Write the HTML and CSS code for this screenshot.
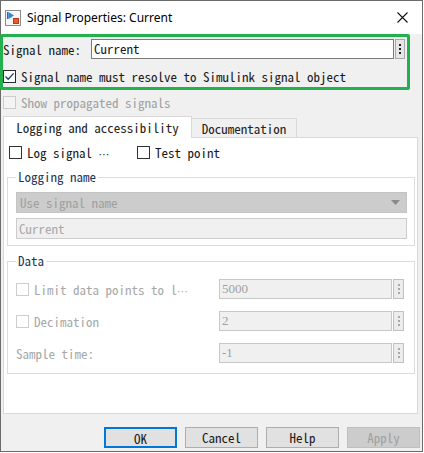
FILE: index.html
```html
<!DOCTYPE html>
<html>
<head>
<meta charset="utf-8">
<link rel="stylesheet" href="styles.css">
</head>
<body>
<div class="window">
  <div class="titlebar">
    <svg class="app-icon" width="16" height="16" viewBox="0 0 16 16">
      <rect x="0.5" y="0.5" width="15" height="15" fill="#f6f6f6" stroke="#8c8c8c"/>
      <rect x="2" y="2" width="1.5" height="7" fill="#1d6cc0"/>
      <path d="M3.5 2 L9 5.5 L3.5 9 Z" fill="#2f86d8"/>
      <rect x="8.5" y="8.5" width="5" height="5" fill="#ee5a2c" stroke="#b8381a"/>
    </svg>
    <span class="title">Signal Properties: Current</span>
    <svg class="close" width="11" height="11" viewBox="0 0 11 11">
      <path d="M0.5 0.5 L10.5 10.5 M10.5 0.5 L0.5 10.5" stroke="#111" stroke-width="1.1"/>
    </svg>
  </div>

  <div class="highlight">
    <div class="name-row">
      <span class="name-label">Signal name:</span>
      <div class="name-input">Current</div>
      <div class="dots-btn"><svg width="2" height="10" viewBox="0 0 2 10"><rect y="0" width="2" height="2"/><rect y="4" width="2" height="2"/><rect y="8" width="2" height="2"/></svg></div>
    </div>
    <div class="check-row">
      <span class="cb checked"><svg width="11" height="11" viewBox="0 0 11 11"><path d="M1.5 5.5 L4.2 8.2 L9.6 2.4" fill="none" stroke="#1d3f6c" stroke-width="1.3"/></svg></span>
      <span>Signal name must resolve to Simulink signal object</span>
    </div>
  </div>

  <div class="check-row show-row disabled">
    <span class="cb"></span>
    <span>Show propagated signals</span>
  </div>

  <div class="tabs">
    <div class="tab active">Logging and accessibility</div>
    <div class="tab">Documentation</div>
  </div>

  <div class="panel">
    <div class="panel-checks">
      <div class="check-item log-item"><span class="cb"></span><span>Log signal <span class="ell">⋯</span></span></div>
      <div class="check-item"><span class="cb"></span><span>Test point</span></div>
    </div>

    <fieldset class="group logging">
      <legend>Logging name</legend>
      <div class="select">
        <span>Use signal name</span>
        <svg class="arrow" width="9" height="5" viewBox="0 0 9 5"><path d="M0 0 H9 L4.5 5 Z" fill="#8a8a8a"/></svg>
      </div>
      <div class="field">Current</div>
    </fieldset>

    <fieldset class="group data">
      <legend>Data</legend>
      <div class="data-grid">
        <div class="data-label"><span class="cb dis"></span><span>Limit data points to l<span class="ell">⋯</span></span></div>
        <div class="value">5000</div>
        <div class="dots-btn dis"><svg width="2" height="10" viewBox="0 0 2 10"><rect y="0" width="2" height="2"/><rect y="4" width="2" height="2"/><rect y="8" width="2" height="2"/></svg></div>

        <div class="data-label"><span class="cb dis"></span><span>Decimation</span></div>
        <div class="value">2</div>
        <div class="dots-btn dis"><svg width="2" height="10" viewBox="0 0 2 10"><rect y="0" width="2" height="2"/><rect y="4" width="2" height="2"/><rect y="8" width="2" height="2"/></svg></div>

        <div class="data-label"><span>Sample time:</span></div>
        <div class="value">-1</div>
        <div class="dots-btn dis"><svg width="2" height="10" viewBox="0 0 2 10"><rect y="0" width="2" height="2"/><rect y="4" width="2" height="2"/><rect y="8" width="2" height="2"/></svg></div>
      </div>
    </fieldset>
  </div>

  <div class="footer">
    <button class="btn default">OK</button>
    <button class="btn">Cancel</button>
    <button class="btn">Help</button>
    <button class="btn disabled-btn">Apply</button>
  </div>
</div>
</body>
</html>
```

FILE: styles.css
```css
* { box-sizing: border-box; }

body {
  margin: 0;
  background: #ffffff;
  font-family: "Noto Sans Mono CJK SC", "Liberation Mono", monospace;
  font-size: 13px;
  color: #1a1a1a;
}

.window {
  width: 423px;
  height: 452px;
  border: 1px solid #6b6b6b;
  background: #f0f0f0;
  display: flex;
  flex-direction: column;
}

.titlebar {
  height: 33px;
  flex: none;
  background: #ffffff;
  display: flex;
  align-items: center;
  padding-left: 4px;
}

.app-icon { flex: none; }

.title {
  margin-left: 6px;
  font-family: "Segoe UI", "Noto Sans", sans-serif;
  font-size: 12px;
  color: #000;
}

.close {
  margin-left: auto;
  margin-right: 14px;
}

.highlight {
  margin-left: -1px;
  width: 410px;
  height: 56px;
  flex: none;
  border: 3px solid #22b14c;
  border-radius: 2px;
  padding-top: 2px;
}

.name-row {
  display: flex;
  align-items: center;
  height: 20px;
}

.name-label {
  width: 88px;
  flex: none;
}

.name-input {
  width: 303px;
  height: 20px;
  border: 1px solid #7a7a7a;
  background: #fff;
  padding-left: 2px;
  line-height: 18px;
}

.dots-btn {
  width: 10px;
  height: 20px;
  margin-left: 1px;
  border: 1px solid #a8a8a8;
  background: #e6e6e6;
  display: flex;
  align-items: center;
  justify-content: center;
  fill: #222;
}

.dots-btn.dis {
  width: 11px;
  border-color: #c2c2c2;
  background: #ececec;
  fill: #a8a8a8;
}

.check-row {
  display: flex;
  align-items: center;
  height: 20px;
  margin-top: 7px;
  gap: 5px;
}

.cb {
  width: 13px;
  height: 13px;
  flex: none;
  border: 1px solid #333333;
  background: #ffffff;
  display: flex;
  align-items: center;
  justify-content: center;
}

.cb.checked { border-color: #2b2b2b; }

.show-row {
  margin-top: 2px;
  padding-left: 2px;
  flex: none;
}

.show-row.disabled { color: #a0a0a0; }
.show-row .cb { border-color: #cccccc; background: #f4f4f4; }

.tabs {
  display: flex;
  align-items: flex-end;
  height: 21px;
  margin-top: 4px;
  margin-left: 2px;
  flex: none;
}

.tab {
  height: 19px;
  width: 105px;
  border: 1px solid #d9d9d9;
  border-left: none;
  border-bottom: none;
  background: #f0f0f0;
  display: flex;
  align-items: center;
  justify-content: center;
  color: #222;
}

.tab.active {
  width: 189px;
  height: 22px;
  border-left: 1px solid #d9d9d9;
  background: #ffffff;
  margin-bottom: -1px;
  position: relative;
  z-index: 1;
  padding-bottom: 1px;
}

.panel {
  margin-left: 2px;
  width: 415px;
  height: 277px;
  flex: none;
  background: #ffffff;
  border: 1px solid #d9d9d9;
  padding-top: 6px;
}

.panel-checks {
  display: flex;
  align-items: center;
  height: 16px;
  padding-left: 5px;
}

.check-item {
  display: flex;
  align-items: center;
  gap: 5px;
}

.log-item { width: 128px; }

.ell {
  font-family: "DejaVu Sans", sans-serif;
  font-size: 11px;
}

.group {
  margin: 0 2px 0 3px;
  border: 1px solid #dcdcdc;
  min-width: 0;
}

.group legend {
  padding: 0 2px;
  line-height: 16px;
  color: #1c3760;
}

.logging {
  margin-top: 9px;
  padding: 7px 7px 6px 8px;
}

.select {
  height: 21px;
  background: #cccccc;
  border: 1px solid #c4c4c4;
  color: #a0a0a0;
  display: flex;
  align-items: center;
  justify-content: space-between;
  padding: 0 6px 0 3px;
}

.field {
  margin-top: 5px;
  height: 21px;
  border: 1px solid #cccccc;
  background: #f0f0f0;
  color: #a8a8a8;
  padding-left: 2px;
  line-height: 19px;
}

.data {
  margin-top: 7px;
  padding: 10px 11px 10px 8px;
}

.data-grid {
  display: grid;
  grid-template-columns: 202px 173px 11px;
  column-gap: 1px;
  row-gap: 12px;
}

.data-label {
  display: flex;
  align-items: center;
  gap: 5px;
  height: 20px;
  color: #a8a8a8;
}

.cb.dis {
  border-color: #cccccc;
  background: #ffffff;
}

.value {
  height: 20px;
  border: 1px solid #c8c8c8;
  background: #f0f0f0;
  color: #a0a0a0;
  font-family: "Liberation Serif", serif;
  font-size: 13px;
  line-height: 18px;
  padding-left: 2px;
}

.data .dots-btn { margin-left: 0; }

.footer {
  display: flex;
  justify-content: flex-end;
  gap: 8px;
  margin-top: 13px;
  padding-right: 2px;
  flex: none;
}

.btn {
  width: 73px;
  height: 21px;
  margin: 0;
  padding: 0;
  font-family: inherit;
  font-size: 13px;
  color: #1a1a1a;
  background: #e1e1e1;
  border: 1px solid #adadad;
}

.btn.default { border: 2px solid #0078d7; }

.btn.disabled-btn {
  background: #cccccc;
  border-color: #bfbfbf;
  color: #a0a0a0;
}
```
